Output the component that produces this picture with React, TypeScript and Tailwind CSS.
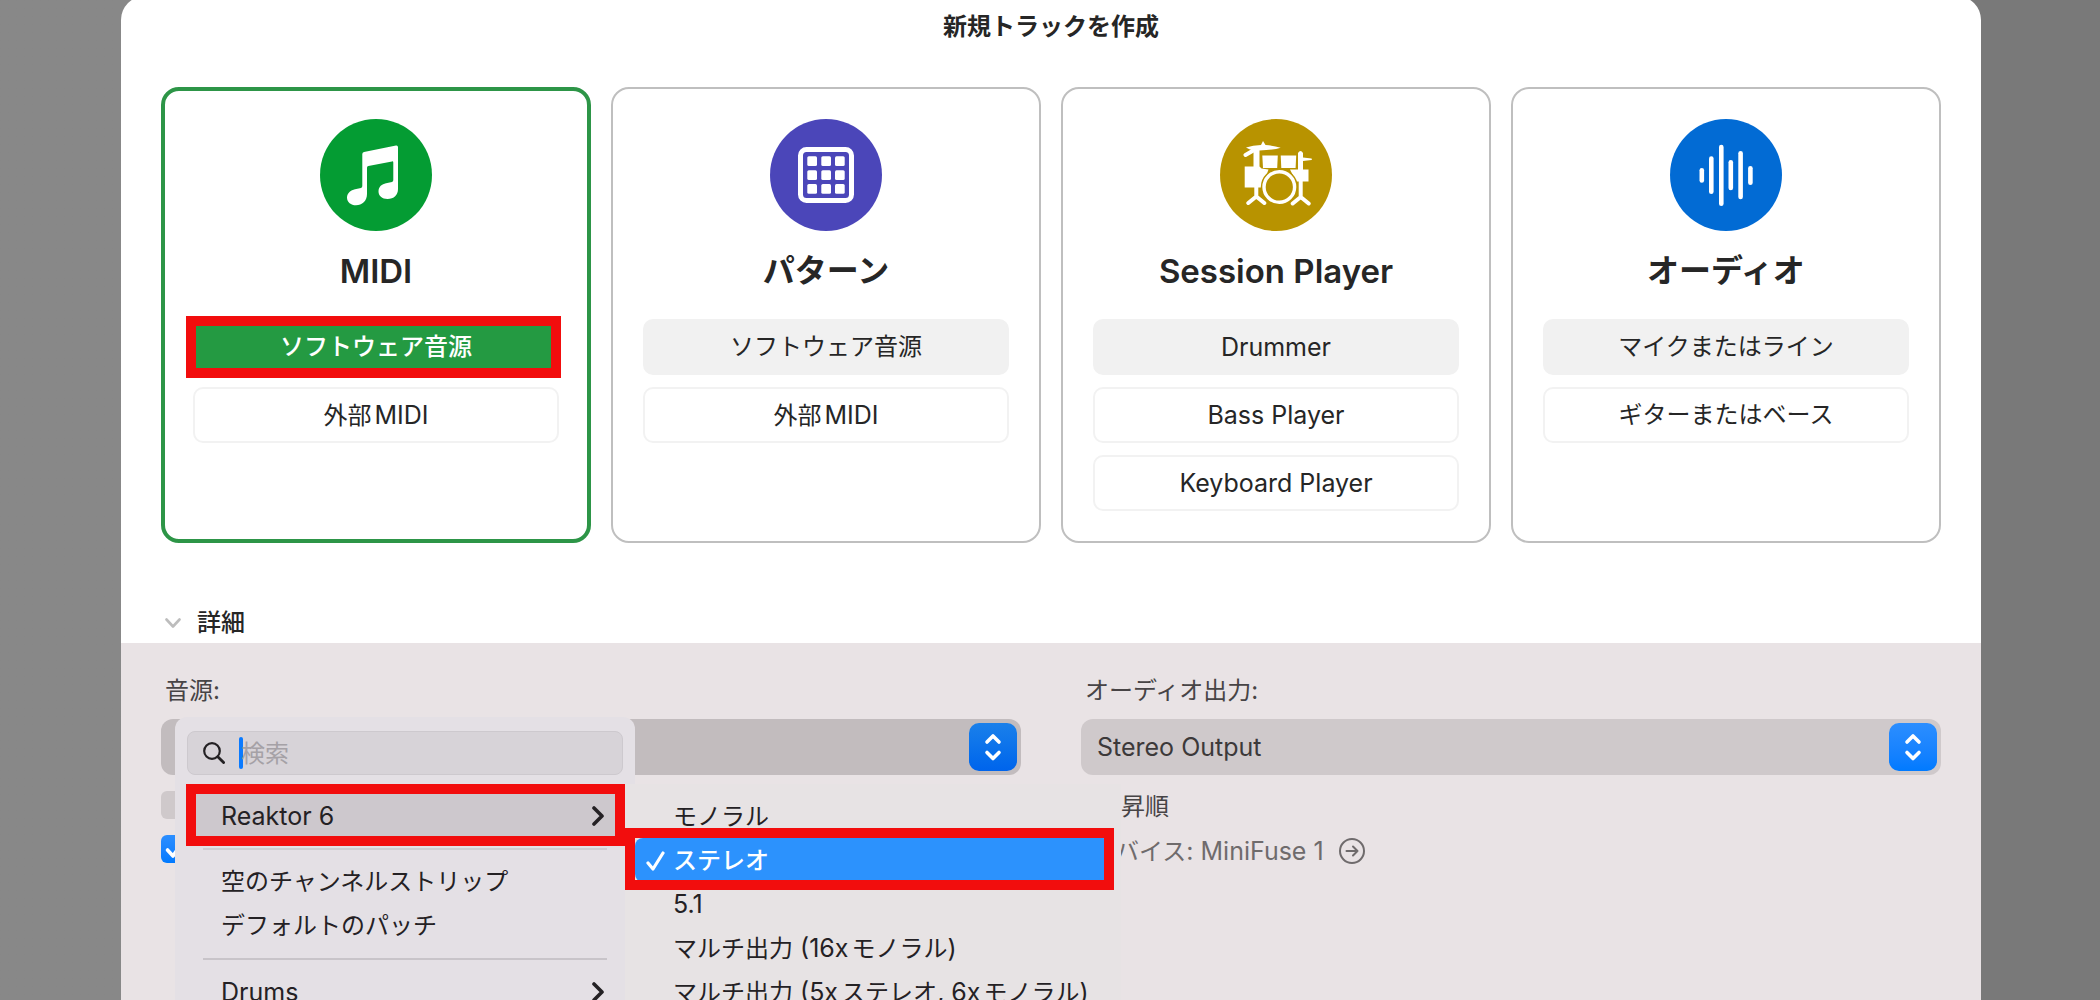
import { useState, type ReactNode } from 'react';

interface TrackCard {
  id: string;
  title: string;
  titleSize: string;
  color: string;
  icon: ReactNode;
  options: string[];
}

function NoteIcon() {
  return (
    <svg viewBox="0 0 112 112" className="size-full" fill="#fff" aria-hidden="true">
      <path d="M44 33 L76 26.6 Q78 26.3 78 28.3 V70 C78 76 74 80 67.5 80 C62 80 58.5 76.8 58.5 72.5 C58.5 67.5 62 65 66 64.2 L72 63 Q73.3 62.6 73.3 61 V43.5 Q73.3 42.2 72 42.4 L48.4 47 Q47 47.3 47 48.7 V75 C47 82 42 86.3 36 86.3 C31 86.3 27 83 27 78.7 C27 74 31 71 35 70.2 L41 69 Q42.3 68.6 42.3 67 V35 Q42.3 33.3 44 33Z" />
    </svg>
  );
}

function PatternIcon() {
  const cells = [37.3, 51.3, 65];
  return (
    <svg viewBox="0 0 112 112" className="size-full" fill="#fff" aria-hidden="true">
      <rect x="30.5" y="30.5" width="51" height="51" rx="6" fill="none" stroke="#fff" strokeWidth="5" />
      {cells.map(y => cells.map(x => <rect key={`${x}-${y}`} x={x} y={y} width="9.7" height="9.8" rx="1.5" />))}
    </svg>
  );
}

function DrumIcon() {
  return (
    <svg viewBox="0 0 112 112" className="size-full" fill="#fff" stroke="#fff" strokeLinecap="round" strokeLinejoin="round" aria-hidden="true">
      {/* cymbals and floor toms */}
      <path stroke="none" d="M26 28.500 Q33 26.200 41 26 L43 22 L45.500 26 Q54 26.500 60.700 28.700 Q54 31 39.500 31.500 V47.500 L41.500 49.500 L48.500 50.500 L42 68.500 H24.700 V47.500 H33.500 V31.500 Q29 30.500 26 28.500Z" />
      <path stroke="none" d="M78 34 Q80.500 30 83 34 V38.500 L91.500 39.500 Q92.500 40.300 91.500 41 L83 42 V50.500 H88.500 V62.500 H76 L70 50.500 H78Z" />
      <path stroke="none" d="M42.300 36.500h15.500l-.6 12.500H43zM60.700 36.500h15.500l-.6 12.500H61.300z" />
      {/* stands */}
      <path fill="none" strokeWidth="4" d="M25.500 36L35 30.500M36.300 66v11.500l-8 6.500M36.300 77.500l8 6.500M80.700 60v18l-8 6.500M80.700 78l8 6.500" />
      {/* kick */}
      <circle cx="59.300" cy="68" r="17.500" fill="#b89300" stroke="#b89300" strokeWidth="2" />
      <circle cx="59.300" cy="68" r="15.300" fill="none" strokeWidth="3.400" />
    </svg>
  );
}

function WaveIcon() {
  const bars = [
    [31.8, 49, 63.7],
    [41.3, 37.3, 75],
    [51.3, 25.7, 87],
    [60.8, 41, 71.3],
    [70.6, 32, 80.3],
    [80.4, 47, 66],
  ];
  return (
    <svg viewBox="0 0 112 112" className="size-full" stroke="#fff" strokeWidth="4.6" strokeLinecap="round" aria-hidden="true">
      {bars.map(([x, top, bottom]) => (
        <path key={x} d={`M${x} ${top + 2.3}V${bottom - 2.3}`} />
      ))}
    </svg>
  );
}

const trackCards: TrackCard[] = [
  { id: 'midi', title: 'MIDI', titleSize: 'text-[33px]', color: 'bg-[#049c33]', icon: <NoteIcon />, options: ['ソフトウェア音源', '外部MIDI'] },
  { id: 'pattern', title: 'パターン', titleSize: 'text-[32px]', color: 'bg-[#4b46b9]', icon: <PatternIcon />, options: ['ソフトウェア音源', '外部MIDI'] },
  { id: 'session', title: 'Session Player', titleSize: 'text-[33px]', color: 'bg-[#b89300]', icon: <DrumIcon />, options: ['Drummer', 'Bass Player', 'Keyboard Player'] },
  { id: 'audio', title: 'オーディオ', titleSize: 'text-[32px]', color: 'bg-[#026bd4]', icon: <WaveIcon />, options: ['マイクまたはライン', 'ギターまたはベース'] },
];

const channelFormats = ['モノラル', 'ステレオ', '5.1', 'マルチ出力 (16xモノラル)', 'マルチ出力 (5xステレオ, 6xモノラル)'];

// Latin runs are set a little larger than the Japanese around them
function Label({ text }: { text: string }) {
  return (
    <span>
      {text.split(/([\x20-\x7e]+)/).map((run, i) => (i % 2 ? <span key={i} className="text-[25px]">{run}</span> : run))}
    </span>
  );
}

// Red frame drawn over the control that a step refers to
function Callout({ className }: { className: string }) {
  return <span className={`pointer-events-none absolute border-[10px] border-[#f20d0d] ${className}`} />;
}

function Chevron() {
  return (
    <svg viewBox="0 0 12 20" className="h-5 w-3" fill="none" stroke="currentColor" strokeWidth="3.6" strokeLinecap="round" strokeLinejoin="round" aria-hidden="true">
      <path d="M2 2l8 8-8 8" />
    </svg>
  );
}

function Stepper({ className }: { className: string }) {
  return (
    <span className={`pointer-events-none absolute top-1 right-1 size-12 rounded-[10px] bg-linear-to-b ${className}`}>
      <svg viewBox="0 0 48 48" fill="none" stroke="#fff" strokeWidth="3.6" strokeLinecap="round" strokeLinejoin="round" aria-hidden="true">
        <path d="M18 19l6-6 6 6M18 29.5l6 6 6-6" />
      </svg>
    </span>
  );
}

function Card({ card, selected, onSelect }: { card: TrackCard; selected: boolean; onSelect: () => void }) {
  const border = selected ? 'border-4 border-[#2d9547] p-7' : 'border-2 border-[#bfbfbf] p-[30px]';

  return (
    <section className={`flex flex-col items-center rounded-[18px] ${border}`}>
      <div className={`size-28 rounded-full ${card.color}`}>{card.icon}</div>
      <h2 className={`mt-[18px] mb-[26px] leading-11 font-semibold ${card.titleSize}`}>{card.title}</h2>
      <div className="flex w-full flex-col gap-3">
        {card.options.map((option, i) => {
          const active = selected && i === 0;
          const style = active
            ? 'bg-[#249a42] border-[#249a42] text-white font-medium'
            : i === 0
              ? 'bg-[#f1f1f1] border-[#f1f1f1]'
              : 'bg-white border-[#f2f2f2]';
          return (
            <button key={option} type="button" onClick={onSelect} className={`relative h-14 w-full rounded-[10px] border-2 ${style}`}>
              <Label text={option} />
              {active && <Callout className="-top-[5px] -right-1 -bottom-[5px] -left-[9px]" />}
            </button>
          );
        })}
      </div>
    </section>
  );
}

function FormatMenu() {
  const [format, setFormat] = useState('ステレオ');

  return (
    <div role="menu" className="absolute top-[65px] left-[464px] w-[496px] bg-[#e7e3e4] px-[10px] pt-[10px] pb-3 text-[#242124]">
      {channelFormats.map(name => {
        const active = name === format;
        return (
          <button
            key={name}
            type="button"
            role="menuitemradio"
            aria-checked={active}
            onClick={() => setFormat(name)}
            className={`relative flex h-11 w-full items-center pt-px pl-[38px] text-left whitespace-nowrap ${active ? 'rounded-lg bg-[#2c92fd] font-medium text-white' : ''}`}
          >
            {active && (
              <svg viewBox="0 0 20 20" className="absolute left-[11px] size-5" fill="none" stroke="currentColor" strokeWidth="3.2" strokeLinecap="round" strokeLinejoin="round" aria-hidden="true">
                <path d="M2 12l5 6L17 2" />
              </svg>
            )}
            <Label text={name} />
            {active && <Callout className="-top-[10px] -right-[3px] -bottom-2 -left-[10px]" />}
          </button>
        );
      })}
    </div>
  );
}

function InstrumentMenu() {
  const [query, setQuery] = useState('');

  return (
    <div role="menu" className="absolute -top-0.5 left-[14px] w-[460px] rounded-xl bg-[#e4e0e5] px-3 pt-[14px] pb-3 text-[#242124]">
      <label className="flex h-11 items-center rounded-lg border border-[#cdc9ce] bg-[#d7d3d8] pl-[15px]">
        <svg viewBox="0 0 22 22" className="size-[22px]" fill="none" stroke="currentColor" strokeWidth="2.2" strokeLinecap="round" aria-hidden="true">
          <circle cx="9" cy="9" r="7.8" />
          <path d="M14.8 14.8l5.8 5.8" strokeWidth="2.8" />
        </svg>
        <span className="ml-[14px] h-8 w-1 rounded-full bg-[#0a7aff]" />
        <input
          type="text"
          aria-label="検索"
          placeholder="検索"
          value={query}
          onChange={e => setQuery(e.target.value)}
          className="-ml-0.5 min-w-0 flex-1 bg-transparent pt-0.5 outline-none placeholder:text-[#a5a1a6]"
        />
      </label>
      <button type="button" role="menuitem" className="relative mt-[19px] flex h-11 w-full items-center justify-between rounded-lg bg-[#cdc8cd] pr-[19px] pl-[34px]">
        <Label text="Reaktor 6" />
        <Chevron />
        <Callout className="-top-[10px] -right-0.5 -bottom-2 -left-px" />
      </button>
      <hr className="mx-4 my-[10px] border-t-2 border-[#d0ccd1]" />
      <button type="button" role="menuitem" className="flex h-11 w-full items-center pl-[34px]">空のチャンネルストリップ</button>
      <button type="button" role="menuitem" className="flex h-11 w-full items-center pl-[34px]">デフォルトのパッチ</button>
      <hr className="mx-4 my-[10px] border-t-2 border-[#c8c4c9]" />
      <button type="button" role="menuitem" className="flex h-11 w-full items-center justify-between pr-[19px] pl-[34px]">
        <Label text="Drums" />
        <Chevron />
      </button>
    </div>
  );
}

export default function App() {
  const [selected, setSelected] = useState('midi');

  return (
    <div className="flex h-screen flex-col overflow-hidden bg-linear-to-r from-[#888888] from-50% to-[#797979] to-50% font-[Inter,'Noto_Sans_CJK_JP',sans-serif] text-[24px] leading-8 text-[#262626] [text-autospace:normal]">
      <main className="-mt-1 mr-[119px] ml-[121px] flex flex-1 flex-col rounded-t-3xl bg-white">
        <h1 className="pt-[15px] text-center leading-8 font-bold">新規トラックを作成</h1>

        <div className="mt-11 grid grid-cols-4 gap-5 px-10">
          {trackCards.map(card => (
            <Card key={card.id} card={card} selected={card.id === selected} onSelect={() => setSelected(card.id)} />
          ))}
        </div>

        <button type="button" className="mt-16 mb-1 flex items-center gap-4 self-start pl-11 font-medium">
          <svg viewBox="0 0 16 10" className="h-[10px] w-4" fill="none" stroke="#bdbdbd" strokeWidth="2.6" strokeLinecap="round" strokeLinejoin="round" aria-hidden="true">
            <path d="M1.5 1.5L8 8.5l6.5-7" />
          </svg>
          詳細
        </button>

        <div className="grid flex-1 grid-cols-2 content-start gap-x-[60px] bg-[#e9e3e5] px-10 pt-8 text-[#474445]">
          <div>
            <label htmlFor="instrument" className="block pl-1">音源:</label>
            <div className="relative mt-3">
              <select id="instrument" className="block h-14 w-full appearance-none rounded-xl bg-[#c2bcbe] px-4" />
              <Stepper className="from-[#1a80ea] to-[#0064ec]" />
              <InstrumentMenu />
              <FormatMenu />
              <div className="mt-4 flex flex-col gap-4">
                <input type="checkbox" aria-label="オプション 1" className="size-7 appearance-none rounded-md bg-[#cfc9cb]" />
                <span className="grid size-7">
                  <input type="checkbox" defaultChecked aria-label="オプション 2" className="size-7 appearance-none rounded-md bg-linear-to-b from-[#2b8eff] to-[#007aff] [grid-area:1/1]" />
                  <svg viewBox="0 0 28 28" className="pointer-events-none [grid-area:1/1]" fill="none" stroke="#fff" strokeWidth="3.6" strokeLinecap="round" strokeLinejoin="round" aria-hidden="true">
                    <path d="M6.5 15l5.500 6L21.500 7" />
                  </svg>
                </span>
              </div>
            </div>
          </div>

          <div>
            <label htmlFor="output" className="block pl-1">オーディオ出力:</label>
            <div className="relative mt-3">
              <select id="output" className="block h-14 w-full appearance-none rounded-xl bg-[#cfc9cb] px-4 text-[25px] text-[#3c393a]">
                <option>Stereo Output</option>
              </select>
              <Stepper className="from-[#2b8eff] to-[#007aff]" />
            </div>
            <label className="mt-[18px] flex h-7 items-center gap-3">
              <input type="checkbox" className="size-7 appearance-none rounded-md bg-[#cfc9cb]" />
              昇順
            </label>
            <div className="mt-4 flex h-7 items-center gap-[15px] pl-[10px] text-[#6f6b6c]">
              <Label text="デバイス: MiniFuse 1" />
              <button type="button" aria-label="デバイス">
                <svg viewBox="0 0 26 26" className="block size-[26px]" fill="none" stroke="currentColor" strokeWidth="2" strokeLinecap="round" strokeLinejoin="round" aria-hidden="true">
                  <circle cx="13" cy="13" r="12" />
                  <path d="M7.500 13h11M14 8.500l4.500 4.500L14 17.500" />
                </svg>
              </button>
            </div>
          </div>
        </div>
      </main>
    </div>
  );
}
